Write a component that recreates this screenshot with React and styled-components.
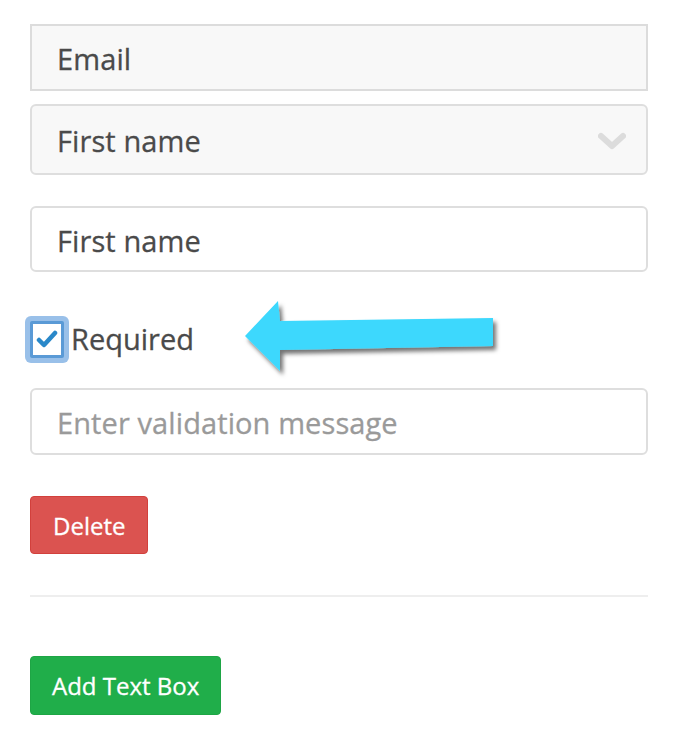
import React from 'react';
import styled, { createGlobalStyle } from 'styled-components';

const Global = createGlobalStyle`
  html, body { margin: 0; padding: 0; background: #fff; }
  body { font-family: "Open Sans", "Noto Sans", sans-serif; }
`;

const Page = styled.div`
  width: 674px;
  height: 738px;
  padding: 24px 26px 0 30px;
  box-sizing: border-box;
  overflow: hidden;
`;

const Field = styled.div`
  box-sizing: border-box;
  height: ${({ h }) => h}px;
  display: flex;
  align-items: center;
  justify-content: space-between;
  padding: 2px 20px 0 25px;
  border: 2px solid ${({ square }) => (square ? '#dcdcdc' : '#dedede')};
  border-radius: ${({ square }) => (square ? '0' : '6px')};
  background: ${({ bg }) => bg || '#fff'};
  color: ${({ muted }) => (muted ? '#9a9a9a' : '#4a4a4a')};
  font-size: 29px;
  letter-spacing: 0.1px;
  margin-top: ${({ mt }) => mt || 0}px;
  -webkit-text-stroke: 0.3px ${({ muted }) => (muted ? '#9a9a9a' : '#4a4a4a')};
`;

const CheckRow = styled.div`
  position: relative;
  height: 50px;
  margin-top: 42px;
  display: flex;
  align-items: center;
  gap: 7px;
`;

const Box = styled.span`
  box-sizing: border-box;
  width: 34px;
  height: 37px;
  border: 3px solid #5a9ad6;
  background: #fff;
  box-shadow: 0 0 0 5px rgba(128, 176, 228, 0.8);
  border-radius: 2px;
  display: flex;
  align-items: center;
  justify-content: center;
`;

const Label = styled.span`
  font-size: 29px;
  color: #4a4a4a;
  -webkit-text-stroke: 0.3px #4a4a4a;
  margin-top: -2px;
`;

const Arrow = styled.svg`
  position: absolute;
  left: 170px;
  top: -30px;
`;

const Button = styled.div`
  display: inline-flex;
  align-items: center;
  justify-content: center;
  box-sizing: border-box;
  height: ${({ h }) => h}px;
  padding: 0 ${({ px }) => px}px;
  border-radius: 4px;
  color: #fff;
  font-size: 24px;
  -webkit-text-stroke: 0.3px #fff;
  background: ${({ bg }) => bg};
  border: 1px solid ${({ bd }) => bd};
`;

const Rule = styled.hr`
  border: 0;
  border-top: 2px solid #eeeeee;
  margin: 41px 0 59px 0;
`;

const Chevron = () => (
  <svg width="28" height="20" viewBox="0 0 28 20">
    <path d="M3 5 L14 15 L25 5" fill="none" stroke="#dcdcdc" strokeWidth="6" strokeLinecap="round" strokeLinejoin="round" />
  </svg>
);

export default function App() {
  return (
    <Page>
      <Global />
      <Field h={67} square bg="#f8f8f8">Email</Field>
      <Field h={71} mt={13} bg="#f8f8f8">
        First name
        <Chevron />
      </Field>
      <Field h={66} mt={31}>First name</Field>
      <CheckRow>
        <Box>
          <svg width="22" height="20" viewBox="0 0 22 20">
            <path d="M3 11 L8 16 L19 4" fill="none" stroke="#2a88c9" strokeWidth="4.5" strokeLinecap="round" strokeLinejoin="round" />
          </svg>
        </Box>
        <Label>Required</Label>
        <Arrow width="310" height="100" viewBox="0 0 310 100">
          <defs>
            <filter id="sh" x="-10%" y="-20%" width="130%" height="150%">
              <feDropShadow dx="3" dy="4" stdDeviation="2" floodColor="#000" floodOpacity="0.55" />
            </filter>
          </defs>
          <polygon
            points="45,52 78,17 80,37 293,34 293,62 80,66 80,87"
            fill="#3dd8fd"
            filter="url(#sh)"
          />
        </Arrow>
      </CheckRow>
      <Field h={67} mt={24} muted>Enter validation message</Field>
      <div style={{ marginTop: 41 }}>
        <Button h={58} px={22} bg="#db5350" bd="#d2403c">Delete</Button>
      </div>
      <Rule />
      <Button h={59} px={21} bg="#20ae4a" bd="#1ea545">Add Text Box</Button>
    </Page>
  );
}
